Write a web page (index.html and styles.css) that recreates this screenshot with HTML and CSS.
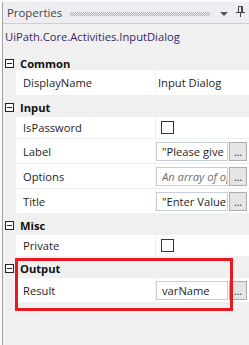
FILE: index.html
```html
<!DOCTYPE html>
<html>
	<head>
		<title>Properties</title>
		<link rel="stylesheet" href="styles.css">
	</head>
	<body>
		<div class="panel">
			<div class="titlebar">
				<span class="title">Properties</span>
				<span class="grip"></span>
				<svg class="menu-arrow" width="8" height="4" viewBox="0 0 8 4"><path d="M0 0H8L4 4Z" fill="#555"/></svg>
				<svg class="pin" width="9" height="11" viewBox="0 0 9 11">
					<path d="M2.5 0.5H6.5V6.5H2.5Z" fill="none" stroke="#444"/>
					<path d="M5 1V6H6V1Z" fill="#444"/>
					<path d="M0 6.5H9" stroke="#444"/>
					<path d="M4.5 7V11" stroke="#444"/>
				</svg>
			</div>
			<div class="typename">UiPath.Core.Activities.InputDialog</div>

			<section class="category">
				<div class="cat-head first"><span class="toggle"></span>Common</div>
				<div class="prop tall">
					<span class="prop-name">DisplayName</span>
					<span class="prop-value plain">Input Dialog</span>
				</div>
			</section>

			<section class="category">
				<div class="cat-head"><span class="toggle"></span>Input</div>
				<div class="prop short">
					<span class="prop-name">IsPassword</span>
					<span class="prop-value"><span class="checkbox"></span></span>
				</div>
				<div class="prop">
					<span class="prop-name">Label</span>
					<span class="prop-value"><span class="textbox"><span class="clip">"Please give your name"</span></span><span class="more">...</span></span>
				</div>
				<div class="prop">
					<span class="prop-name">Options</span>
					<span class="prop-value"><span class="textbox hint"><span class="clip">An array of options</span></span><span class="more">...</span></span>
				</div>
				<div class="prop">
					<span class="prop-name">Title</span>
					<span class="prop-value"><span class="textbox"><span class="clip">"Enter Value"</span></span><span class="more">...</span></span>
				</div>
			</section>

			<section class="category">
				<div class="cat-head"><span class="toggle"></span>Misc</div>
				<div class="prop short">
					<span class="prop-name">Private</span>
					<span class="prop-value"><span class="checkbox"></span></span>
				</div>
			</section>

			<section class="category marked">
				<div class="cat-head"><span class="toggle"></span>Output</div>
				<div class="prop">
					<span class="prop-name">Result</span>
					<span class="prop-value"><span class="textbox"><span class="clip">varName</span></span><span class="more">...</span></span>
				</div>
			</section>
		</div>
	</body>
</html>
```

FILE: styles.css
```css
body {
	margin: 0;
	background: #fafafa;
	font-family: "Open Sans", "Noto Sans", sans-serif;
	font-size: 11.2px;
	color: #1e1e1e;
}

.panel {
	margin: 2px 0 0 2px;
	height: 343px;
	border-left: 1px solid #a3a3a3;
	background: #f0f0f0;
	box-sizing: border-box;
}

.titlebar {
	display: flex;
	align-items: center;
	height: 22px;
	padding: 0 4px;
	background: #eeeef2;
	border-bottom: 1px solid #cccedb;
	box-sizing: border-box;
}
.title {
	color: #444;
	font-size: 11.4px;
}
.grip {
	flex-grow: 1;
	height: 4px;
	margin: 2px 10px 0 8px;
	background: conic-gradient(#b4b4b8 25%, transparent 0 50%, #b4b4b8 0 75%, transparent 0) 0 0 / 2px 2px;
}
.menu-arrow {
	margin: 3px 8px 0 0;
}
.pin {
	margin-top: -2px;
}

.typename {
	height: 27px;
	padding: 5px 0 0 2px;
	box-sizing: border-box;
	color: #3b2466;
}

.category {
	position: relative;
}
.cat-head {
	display: flex;
	align-items: center;
	height: 21px;
	padding: 2px 0 0 2px;
	box-sizing: border-box;
	font-weight: bold;
	color: #111;
}
.cat-head.first {
	height: 19px;
	padding-top: 5px;
}
.toggle {
	position: relative;
	width: 9px;
	height: 9px;
	margin-right: 6px;
	border: 1px solid #222;
	box-sizing: border-box;
	background: #fff;
}
.toggle::after {
	content: "";
	position: absolute;
	left: 1px;
	top: 3px;
	width: 5px;
	height: 1px;
	background: #222;
}

.prop {
	display: flex;
	height: 24px;
	margin: 0 0 1px 13px;
}
.prop.tall {
	height: 25px;
}
.prop.short {
	height: 21px;
}
.prop-name {
	display: flex;
	align-items: center;
	width: 139px;
	padding-left: 7px;
	box-sizing: border-box;
	background: #fff;
}
.prop-value {
	display: flex;
	align-items: center;
	flex-grow: 1;
	margin-left: 1px;
	background: #fff;
}
.prop-value.plain {
	padding-left: 2px;
}

.textbox {
	width: 72px;
	height: 19px;
	padding: 1px 0 0 5px;
	border: 1px solid #c9cfdc;
	box-sizing: border-box;
	overflow: hidden;
	line-height: 15px;
}
.clip {
	display: block;
	width: 65px;
	overflow: hidden;
	white-space: nowrap;
}
.textbox.hint {
	color: #6d6d6d;
	font-style: italic;
}
.more {
	width: 18px;
	height: 19px;
	margin-left: 1px;
	border: 1px solid #adadad;
	box-sizing: border-box;
	background: #e5e5e5;
	text-align: center;
	line-height: 19px;
	font-size: 10px;
}
.checkbox {
	width: 13px;
	height: 13px;
	margin-left: 5px;
	border: 1px solid #333;
	box-sizing: border-box;
	background: #fff;
}

.marked::after {
	content: "";
	position: absolute;
	left: 12px;
	top: 1px;
	width: 218px;
	height: 53px;
	border: 3px solid #e41b23;
	box-sizing: border-box;
}
```
